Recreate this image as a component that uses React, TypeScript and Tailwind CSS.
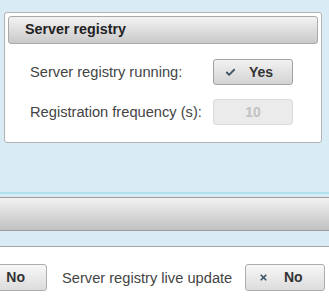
import { Check, X } from 'lucide-react'

const font = { fontFamily: '"Liberation Sans", Arial, sans-serif' }

function ToggleButton({ on, className }: { on: boolean; className?: string }) {
  return (
    <button
      className={`flex h-[27px] w-[80px] items-center rounded-[3px] border border-[#adadad] bg-gradient-to-b from-[#f7f7f7] to-[#dcdcdc] text-[14px] font-bold text-[#333] ${className ?? ''}`}
    >
      <span className="flex w-[30px] justify-center pl-[4px] text-[#3d5566]">
        {on ? <Check className="h-[11px] w-[11px]" strokeWidth={4} /> : <X className="h-[9px] w-[9px]" strokeWidth={4.5} />}
      </span>
      <span className="flex-1 pr-[14px] text-center">{on ? 'Yes' : 'No'}</span>
    </button>
  )
}

export default function App() {
  return (
    <div className="h-[308px] w-[329px] overflow-hidden bg-[#d9ecf5]" style={font}>
      {/* Server registry panel */}
      <div className="ml-[4px] mt-[12px] h-[131px] w-[318px] rounded-[3px] border border-[#b3b3b3] bg-white p-[3px]">
        <div className="flex h-[28px] items-center rounded-[3px] border border-[#a9a9a9] bg-gradient-to-b from-[#f3f3f3] to-[#c9c9c9] pl-[16px] text-[14.3px] font-bold text-[#222]">
          Server registry
        </div>
        <div className="grid grid-cols-[183px_80px] items-center gap-y-[14px] pl-[22px] pt-[15px] text-[14.67px] text-[#444]">
          <span>Server registry running:</span>
          <button className="flex h-[26px] w-[80px] items-center rounded-[3px] border border-[#a3a3a3] bg-gradient-to-b from-[#f2f2f2] to-[#d3d3d3] text-[14px] font-bold text-[#333]">
            <span className="flex w-[26px] justify-center pl-[6px] text-[#3d5566]">
              <Check className="h-[11px] w-[11px]" strokeWidth={4} />
            </span>
            <span className="flex-1 pr-[10px] text-center">Yes</span>
          </button>
          <span>Registration frequency (s):</span>
          <div className="flex h-[26px] w-[80px] items-center justify-center rounded-[3px] border border-[#dcdcdc] bg-[#ebebeb] text-[14px] font-bold text-[#c2c2c2]">
            10
          </div>
        </div>
      </div>

      {/* Section divider */}
      <div className="mt-[49px] h-[2px] bg-[#b2e2ee]" />
      <div className="mt-[3px] h-[34px] border-y border-[#9e9e9e] bg-gradient-to-b from-[#f3f1f1] to-[#c1c1c1]" />
      <div className="h-[15px]" />

      {/* Live update row */}
      <div className="h-[70px] border-t border-[#a5a5a5] bg-white pt-[17px]">
        <div className="flex items-center text-[14.67px] text-[#444]">
          <button className="flex h-[27px] w-[80px] ml-[-33px] items-center justify-end rounded-[3px] border border-[#adadad] bg-gradient-to-b from-[#f7f7f7] to-[#dcdcdc] pr-[21px] text-[14px] font-bold text-[#333]">
            No
          </button>
          <span className="ml-[15px]">Server registry live update</span>
          <ToggleButton on={false} className="ml-[13px]" />
        </div>
      </div>
    </div>
  )
}
